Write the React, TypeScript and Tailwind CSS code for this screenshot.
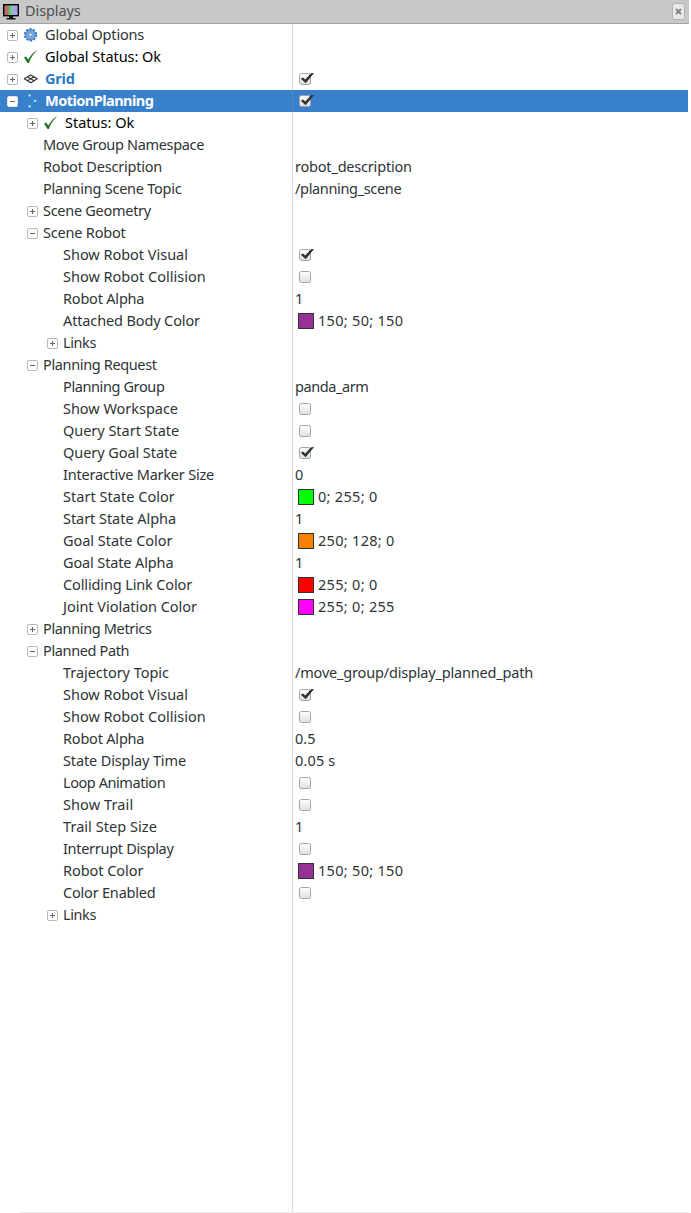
import React from "react";

type Icon = "gear" | "check" | "grid" | "motion";
type Row = {
  label: string;
  level: 0 | 1 | 2;
  expand?: "+" | "-";
  icon?: Icon;
  value?: string;
  checked?: boolean;
  color?: string;
  tone?: "black" | "link" | "selected";
  spacing?: string;
  valueSpacing?: string;
};

const rows: Row[] = [
  { label: "Global Options", level: 0, expand: "+", icon: "gear", spacing: "tracking-[-0.17px]" },
  { label: "Global Status: Ok", level: 0, expand: "+", icon: "check", tone: "black", spacing: "tracking-[-0.05px]" },
  { label: "Grid", level: 0, expand: "+", icon: "grid", checked: true, tone: "link" },
  { label: "MotionPlanning", level: 0, expand: "-", icon: "motion", checked: true, tone: "selected", spacing: "tracking-[-0.52px]" },
  { label: "Status: Ok", level: 1, expand: "+", icon: "check", tone: "black", spacing: "tracking-[0px]" },
  { label: "Move Group Namespace", level: 1, spacing: "tracking-[-0.33px]" },
  { label: "Robot Description", level: 1, value: "robot_description" },
  { label: "Planning Scene Topic", level: 1, value: "/planning_scene", spacing: "tracking-[-0.25px]", valueSpacing: "tracking-[-0.34px]" },
  { label: "Scene Geometry", level: 1, expand: "+", spacing: "tracking-[-0.28px]" },
  { label: "Scene Robot", level: 1, expand: "-" },
  { label: "Show Robot Visual", level: 2, checked: true, spacing: "tracking-[-0.02px]" },
  { label: "Show Robot Collision", level: 2, checked: false, spacing: "tracking-[0px]" },
  { label: "Robot Alpha", level: 2, value: "1" },
  { label: "Attached Body Color", level: 2, value: "150; 50; 150", color: "bg-[#963296]", spacing: "tracking-[-0.13px]" },
  { label: "Links", level: 2, expand: "+", spacing: "tracking-[-0.4px]" },
  { label: "Planning Request", level: 1, expand: "-", spacing: "tracking-[-0.36px]" },
  { label: "Planning Group", level: 2, value: "panda_arm", spacing: "tracking-[-0.39px]", valueSpacing: "tracking-[-0.43px]" },
  { label: "Show Workspace", level: 2, checked: false, spacing: "tracking-[-0.03px]" },
  { label: "Query Start State", level: 2, checked: false, spacing: "tracking-[-0.03px]" },
  { label: "Query Goal State", level: 2, checked: true, spacing: "tracking-[-0.07px]" },
  { label: "Interactive Marker Size", level: 2, value: "0", spacing: "tracking-[-0.22px]" },
  { label: "Start State Color", level: 2, value: "0; 255; 0", color: "bg-[#00ff00]", spacing: "tracking-[0.03px]" },
  { label: "Start State Alpha", level: 2, value: "1", spacing: "tracking-[-0.05px]" },
  { label: "Goal State Color", level: 2, value: "250; 128; 0", color: "bg-[#fa8000]", spacing: "tracking-[-0.03px]" },
  { label: "Goal State Alpha", level: 2, value: "1", spacing: "tracking-[-0.13px]" },
  { label: "Colliding Link Color", level: 2, value: "255; 0; 0", color: "bg-[#ff0000]", spacing: "tracking-[-0.13px]" },
  { label: "Joint Violation Color", level: 2, value: "255; 0; 255", color: "bg-[#ff00ff]", spacing: "tracking-[-0.02px]" },
  { label: "Planning Metrics", level: 1, expand: "+", spacing: "tracking-[-0.35px]" },
  { label: "Planned Path", level: 1, expand: "-", spacing: "tracking-[-0.36px]" },
  { label: "Trajectory Topic", level: 2, value: "/move_group/display_planned_path", spacing: "tracking-[-0.05px]", valueSpacing: "tracking-[-0.18px]" },
  { label: "Show Robot Visual", level: 2, checked: true, spacing: "tracking-[-0.02px]" },
  { label: "Show Robot Collision", level: 2, checked: false, spacing: "tracking-[0px]" },
  { label: "Robot Alpha", level: 2, value: "0.5", valueSpacing: "tracking-[0px]" },
  { label: "State Display Time", level: 2, value: "0.05 s", spacing: "tracking-[-0.13px]", valueSpacing: "tracking-[0.15px]" },
  { label: "Loop Animation", level: 2, checked: false, spacing: "tracking-[-0.43px]" },
  { label: "Show Trail", level: 2, checked: false, spacing: "tracking-[0.1px]" },
  { label: "Trail Step Size", level: 2, value: "1", spacing: "tracking-[0.05px]" },
  { label: "Interrupt Display", level: 2, checked: false, spacing: "tracking-[-0.3px]" },
  { label: "Robot Color", level: 2, value: "150; 50; 150", color: "bg-[#963296]", spacing: "tracking-[-0.05px]" },
  { label: "Color Enabled", level: 2, checked: false },
  { label: "Links", level: 2, expand: "+", spacing: "tracking-[-0.4px]" },
];

const indent = ["pl-[7px]", "pl-[27px]", "pl-[47px]"];

function Expander({ kind, selected }: { kind: "+" | "-"; selected: boolean }) {
  return (
    <svg className="mt-px size-[11px] shrink-0" viewBox="0 0 11 11">
      <rect x=".5" y=".5" width="10" height="10" rx="1.5" fill="#fff" stroke={selected ? "#e4e4e4" : "#b8b8b8"} />
      <path d={kind === "+" ? "M3 5.5h5M5.5 3v5" : "M3 5.5h5"} stroke="#666" fill="none" />
    </svg>
  );
}

function RowIcon({ icon }: { icon: Icon }) {
  return (
    <svg className="ml-[5px] mr-1.5 h-4 w-4 shrink-0" viewBox="0 0 16 16">
      {icon === "gear" && (
        <g fill="none" stroke="#3c75bb">
          <circle cx="7.5" cy="7.8" r="5.8" strokeWidth="1.8" strokeDasharray="2.3 1.34" />
          <circle cx="7.5" cy="7.8" r="4" fill="#9fc1ec" stroke="#6f9fdc" strokeWidth="2.2" />
          <circle cx="7.5" cy="7.8" r="5" stroke="#4479bd" strokeWidth=".7" />
          <circle cx="7.5" cy="7.8" r="1.8" fill="#e8f1fb" strokeWidth=".9" />
        </g>
      )}
      {icon === "check" && (
        <path d="M1 8.6 3 7.4 5.3 10.6C7.3 6.7 9.8 3.6 13.5 1.4L13.8 1.8C10.3 5 7.8 8.8 5.9 14L4.5 14Z" fill="#217821" />
      )}
      {icon === "grid" && (
        <path d="M1.3 7.7 7.7 3.9 14.2 7.7 7.7 11.7ZM4.5 9.7 11 5.8M4.5 5.8 11 9.7" fill="none" stroke="#343434" strokeWidth="1.15" strokeLinejoin="round" />
      )}
      {icon === "motion" && (
        <g>
          <path d="M7 3 12.5 8 7 13 10 8Z" fill="#259ddd" opacity=".85" />
          <circle cx="6.6" cy="2.4" r="1.2" fill="#b5e8fa" />
          <circle cx="12.2" cy="7.9" r="1.2" fill="#b5e8fa" />
          <circle cx="6.6" cy="13.2" r="1.2" fill="#b5e8fa" />
        </g>
      )}
    </svg>
  );
}

function Checkbox({ checked }: { checked: boolean }) {
  return (
    <svg className="ml-1 h-4 w-5 shrink-0" viewBox="0 0 20 16">
      <defs>
        <linearGradient id="boxFill" x1="0" y1="0" x2="0" y2="1">
          <stop offset="0" stopColor="#fff" />
          <stop offset="1" stopColor="#dedede" />
        </linearGradient>
      </defs>
      <rect x=".5" y="2.5" width="11" height="11" rx="2" fill="url(#boxFill)" stroke="#a3a3a3" />
      {checked && <path d="M1.8 7.7 4 6.6 6.2 8.6 12 2.2 15.2 2.1 6.6 12.2Z" fill="#2e3436" />}
    </svg>
  );
}

function TreeRow({ row }: { row: Row }) {
  const selected = row.tone === "selected";
  const tone =
    row.tone === "black" ? "text-black" : row.tone === "link" ? "font-bold text-[#2a79c4]" : selected ? "font-bold text-white" : "text-[#2e3436]";
  return (
    <div className={`flex h-[22px] w-[688px] ${selected ? "bg-[#3880cc]" : ""}`}>
      <div className={`flex w-[292px] shrink-0 items-center ${indent[row.level]}`}>
        {row.expand ? <Expander kind={row.expand} selected={selected} /> : null}
        {row.icon ? <RowIcon icon={row.icon} /> : null}
        <span className={`whitespace-pre pb-0.5 ${row.icon ? "" : row.expand ? "ml-[5px]" : "ml-4"} ${tone} ${row.spacing ?? ""}`}>{row.label}</span>
      </div>
      <div className={`w-px shrink-0 ${selected ? "bg-[#5a87b8]" : "bg-[#dadada]"}`} />
      <div className="flex items-center pl-[2px] text-[#2e3436]">
        {row.checked !== undefined && <Checkbox checked={row.checked} />}
        {row.color && <span className={`ml-[3px] mr-1 size-4 border border-[#2e3436] ${row.color}`} />}
        {row.value && <span className={`whitespace-pre pb-0.5 ${row.color ? "tracking-[0.3px]" : row.valueSpacing ?? ""}`}>{row.value}</span>}
      </div>
    </div>
  );
}

export default function App() {
  return (
    <div className="flex h-[1213px] w-[691px] flex-col overflow-hidden bg-white font-['Noto_Sans','Open_Sans',sans-serif] text-[14.5px] leading-[22px] tracking-[-0.2px] text-[#2e3436]">
      <header className="flex h-6 w-[689px] shrink-0 items-center border-b border-[#a3a3a3] bg-[#c8c8c8] pl-[3px]">
        <svg className="h-[18px] w-[17px]" viewBox="0 0 17 18">
          <defs>
            <linearGradient id="screen" x1="0" y1="0" x2="1" y2="0">
              <stop offset=".32" stopColor="#b66c70" />
              <stop offset=".34" stopColor="#62ba77" />
              <stop offset=".65" stopColor="#83d69b" />
              <stop offset=".67" stopColor="#a9a0ef" />
            </linearGradient>
          </defs>
          <rect x=".7" y="1.7" width="14.6" height="11" fill="url(#screen)" stroke="#000" strokeWidth="1.4" />
          <path d="M6 13h4v2h2.5v1.5h-9V15H6Z" fill="#111" />
        </svg>
        <span className="ml-[5px] pb-[3px] tracking-[-0.1px] text-[#4c5052]">Displays</span>
        <span className="ml-auto mr-1 flex h-[17px] w-[13px] items-center justify-center rounded-[3px] border border-[#b2b2b2] bg-[#e9e9e9]">
          <svg className="size-[7px]" viewBox="0 0 7 7">
            <path d="m1 1 5 5M6 1 1 6" stroke="#858585" strokeWidth="2" />
          </svg>
        </span>
      </header>
      <main className="shrink-0">
        {rows.map((row, i) => (
          <TreeRow key={i} row={row} />
        ))}
      </main>
      <div className="flex grow pl-[292px]">
        <div className="w-px bg-[#dadada]" />
      </div>
      <div className="ml-5 h-px w-[669px] shrink-0 bg-[#ebebeb]" />
    </div>
  );
}
